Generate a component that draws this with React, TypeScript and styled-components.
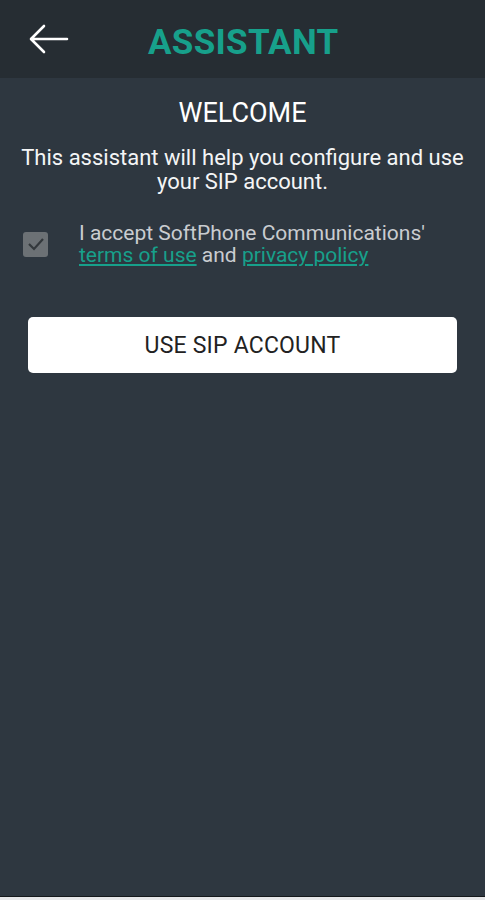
import React from "react";
import styled, { createGlobalStyle } from "styled-components";

const Global = createGlobalStyle`
  html, body { margin: 0; padding: 0; background: #e8e8ea; }
  body { font-family: Roboto, "Noto Sans", sans-serif; }
`;

const Screen = styled.div`
  width: 485px;
  height: 896px;
  background: #2e3740;
  display: flex;
  flex-direction: column;
  border-bottom: 1px solid #15191c;
`;

const Header = styled.header`
  height: 78px;
  flex-shrink: 0;
  background: #262d33;
  display: flex;
  align-items: center;
`;

const BackButton = styled.button`
  background: none;
  border: none;
  padding: 0;
  margin-left: 28px;
  width: 42px;
  height: 34px;
  display: flex;
  align-items: center;
  justify-content: center;
`;

const Title = styled.h1`
  margin: 7px 0 0 78px;
  font-family: Roboto, sans-serif;
  font-weight: 700;
  font-size: 35px;
  line-height: normal;
  letter-spacing: 0.3px;
  color: #17a08b;
`;

const Content = styled.main`
  display: flex;
  flex-direction: column;
  align-items: center;
  padding: 0 10px;
`;

const Welcome = styled.h2`
  margin: 19px 0 0;
  font-weight: 400;
  font-size: 27px;
  line-height: 32px;
  color: #ffffff;
`;

const Intro = styled.p`
  margin: 17px 0 0;
  text-align: center;
  font-size: 22px;
  line-height: 24px;
  color: #f4f5f6;
  white-space: nowrap;
`;

const AcceptRow = styled.label`
  align-self: stretch;
  display: flex;
  align-items: center;
  margin-top: 28px;
  padding-left: 13px;
  gap: 31px;
`;

const Box = styled.span`
  width: 25px;
  height: 25px;
  border-radius: 3px;
  background: #6c7175;
  display: flex;
  align-items: center;
  justify-content: center;
  flex-shrink: 0;
`;

const AcceptText = styled.span`
  font-size: 21px;
  line-height: 22px;
  color: #c9ccd0;
  white-space: nowrap;
`;

const Link = styled.a`
  color: #17a08b;
  text-decoration: underline;
  text-underline-offset: 2px;
`;

const PrimaryButton = styled.button`
  align-self: stretch;
  margin: 51px 18px 0;
  height: 56px;
  background: #ffffff;
  border: none;
  border-radius: 5px;
  font-family: Roboto, sans-serif;
  font-size: 23px;
  color: #222222;
  letter-spacing: 0.2px;
`;

export default function App() {
  return (
    <>
      <Global />
      <Screen>
        <Header>
          <BackButton aria-label="Back">
            <svg width="42" height="34" viewBox="0 0 42 34" fill="none">
              <path
                d="M39 17H4M16 4L3 17L16 30"
                stroke="#ffffff"
                strokeWidth="2.6"
                strokeLinecap="round"
                strokeLinejoin="round"
              />
            </svg>
          </BackButton>
          <Title>ASSISTANT</Title>
        </Header>
        <Content>
          <Welcome>WELCOME</Welcome>
          <Intro>
            This assistant will help you configure and use
            <br />
            your SIP account.
          </Intro>
          <AcceptRow>
            <Box>
              <svg width="18" height="14" viewBox="0 0 18 14" fill="none">
                <path d="M2 7L7 12L16 2" stroke="#33383c" strokeWidth="2.2" />
              </svg>
            </Box>
            <AcceptText>
              I accept SoftPhone Communications'
              <br />
              <Link>terms of use</Link> and <Link>privacy policy</Link>
            </AcceptText>
          </AcceptRow>
          <PrimaryButton>USE SIP ACCOUNT</PrimaryButton>
        </Content>
      </Screen>
    </>
  );
}
